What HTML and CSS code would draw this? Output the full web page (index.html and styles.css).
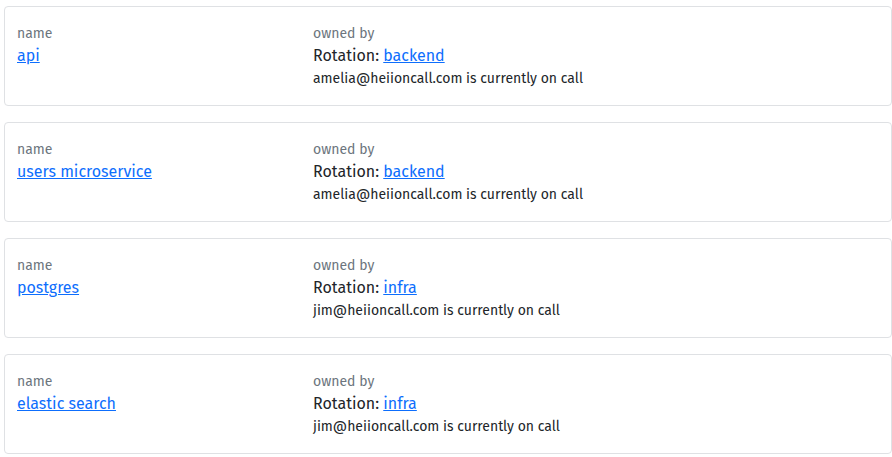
FILE: index.html
```html
<!DOCTYPE html>
<html>
<head>
<meta charset="utf-8">
<link rel="stylesheet" href="styles.css">
</head>
<body>
<div class="list">
  <div class="card">
    <div class="col name-col">
      <div class="label">name</div>
      <a class="link" href="#">api</a>
    </div>
    <div class="col">
      <div class="label">owned by</div>
      <div class="rotation">Rotation: <a class="link" href="#">backend</a></div>
      <div class="oncall">amelia@heiioncall.com is currently on call</div>
    </div>
  </div>
  <div class="card">
    <div class="col name-col">
      <div class="label">name</div>
      <a class="link" href="#">users microservice</a>
    </div>
    <div class="col">
      <div class="label">owned by</div>
      <div class="rotation">Rotation: <a class="link" href="#">backend</a></div>
      <div class="oncall">amelia@heiioncall.com is currently on call</div>
    </div>
  </div>
  <div class="card">
    <div class="col name-col">
      <div class="label">name</div>
      <a class="link" href="#">postgres</a>
    </div>
    <div class="col">
      <div class="label">owned by</div>
      <div class="rotation">Rotation: <a class="link" href="#">infra</a></div>
      <div class="oncall">jim@heiioncall.com is currently on call</div>
    </div>
  </div>
  <div class="card">
    <div class="col name-col">
      <div class="label">name</div>
      <a class="link" href="#">elastic search</a>
    </div>
    <div class="col">
      <div class="label">owned by</div>
      <div class="rotation">Rotation: <a class="link" href="#">infra</a></div>
      <div class="oncall">jim@heiioncall.com is currently on call</div>
    </div>
  </div>
</div>
</body>
</html>
```
FILE: styles.css
```css
* { box-sizing: border-box; }
body {
  margin: 0;
  padding: 6px 0 0 4px;
  font-family: "Fira Sans", Roboto, "Noto Sans", sans-serif;
  color: #212529;
  background: #fff;
}
.list {
  display: flex;
  flex-direction: column;
  gap: 16px;
}
.card {
  display: flex;
  border: 1px solid #dfe1e4;
  border-radius: 4px;
  padding: 16px 12px;
  height: 100px;
}
.col {
  display: flex;
  flex-direction: column;
  align-items: flex-start;
}
.name-col { width: 296px; }
.label {
  font-size: 14px;
  line-height: 21px;
  color: #6c757d;
}
.link {
  color: #0d6efd;
  text-decoration: underline;
}
.name-col .link, .rotation {
  font-size: 16px;
  line-height: 24px;
}
.oncall {
  font-size: 14px;
  line-height: 21px;
}
```
